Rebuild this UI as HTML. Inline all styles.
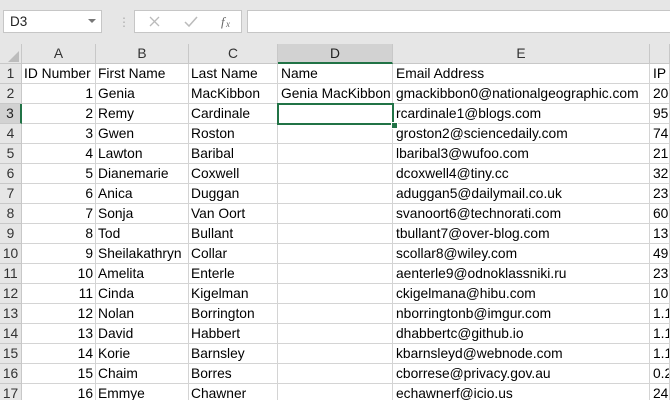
<!DOCTYPE html>
<html><head><style>
html,body{margin:0;width:670px;height:400px;overflow:hidden}
body{background:#fff;font-family:"Liberation Sans",Arial,sans-serif;position:relative}
.top{position:absolute;left:0;top:0;width:670px;height:44px;background:#e6e6e6}
.nb{position:absolute;left:3px;top:10px;width:99px;height:23px;background:#fff;border:1px solid #c6c6c6;box-sizing:border-box;font-size:13.5px;line-height:21px;padding-left:6px;color:#222}
.fb{position:absolute;left:134px;top:10px;width:108px;height:23px;background:#fff;border:1px solid #c6c6c6;box-sizing:border-box}
.fx{position:absolute;left:247px;top:10px;width:423px;height:23px;background:#fff;border:1px solid #c6c6c6;border-right:none;box-sizing:border-box}
.c{position:absolute;box-sizing:border-box;border-right:1px solid #d4d4d4;border-bottom:1px solid #d4d4d4;font-size:13.8px;line-height:20px;white-space:nowrap;overflow:hidden;padding:0 2px;color:#000}
.h{background:#e6e6e6;border-color:#c8c8c8;text-align:center;color:#333}
.r{text-align:right}
</style></head><body>
<div class="top"></div>
<div class="nb">D3</div>
<div style="position:absolute;left:88px;top:19px;width:0;height:0;border-left:4px solid transparent;border-right:4px solid transparent;border-top:4px solid #777"></div>
<div style="position:absolute;left:118px;top:15px;color:#aaa;font-size:12px">⋮</div>
<div class="fb">
<svg width="106" height="21" style="position:absolute;left:0;top:0"><path d="M15 6l9 9M24 6l-9 9" stroke="#bbb" stroke-width="1.3" fill="none"/><path d="M50 11l4 4 8-9" stroke="#bbb" stroke-width="1.5" fill="none"/><text x="86" y="15" font-family="Liberation Serif" font-style="italic" font-size="13" fill="#666">f</text><text x="91" y="16" font-family="Liberation Serif" font-style="italic" font-size="9" fill="#666">x</text></svg>
</div>
<div class="fx"></div>
<div id="g"></div>
<script>
var cols=[0,22,96,189,278,393,650,670];
var hd=["","A","B","C","D","E",""];
var data=[
["ID Number","First Name","Last Name","Name","Email Address","IP Address"],
["1","Genia","MacKibbon","Genia MacKibbon","gmackibbon0@nationalgeographic.com","200.1"],
["2","Remy","Cardinale","","rcardinale1@blogs.com","95.1"],
["3","Gwen","Roston","","groston2@sciencedaily.com","74.1"],
["4","Lawton","Baribal","","lbaribal3@wufoo.com","217"],
["5","Dianemarie","Coxwell","","dcoxwell4@tiny.cc","32.1"],
["6","Anica","Duggan","","aduggan5@dailymail.co.uk","231"],
["7","Sonja","Van Oort","","svanoort6@technorati.com","60.1"],
["8","Tod","Bullant","","tbullant7@over-blog.com","139"],
["9","Sheilakathryn","Collar","","scollar8@wiley.com","49.1"],
["10","Amelita","Enterle","","aenterle9@odnoklassniki.ru","238"],
["11","Cinda","Kigelman","","ckigelmana@hibu.com","109"],
["12","Nolan","Borrington","","nborringtonb@imgur.com","1.1"],
["13","David","Habbert","","dhabbertc@github.io","1.1"],
["14","Korie","Barnsley","","kbarnsleyd@webnode.com","1.1"],
["15","Chaim","Borres","","cborrese@privacy.gov.au","0.2"],
["16","Emmye","Chawner","","echawnerf@icio.us","248"]];
var h="";
function cell(x,y,w,ht,cls,t,st){h+='<div class="c '+cls+'" style="left:'+x+'px;top:'+y+'px;width:'+w+'px;height:'+ht+'px;'+(st||'')+'">'+t+'</div>';}
for(var i=0;i<7;i++){var st=i==4?'background:#d2d2d2;border-bottom:2px solid #217346;color:#222':'';cell(cols[i],44,cols[i+1]-cols[i],20,'h',hd[i],st);}
h+='<div style="position:absolute;left:8px;top:51px;width:0;height:0;border-left:11px solid transparent;border-bottom:11px solid #bcbcbc"></div>';
for(var r=0;r<data.length;r++){var y=64+r*20;
 cell(0,y,22,20,'h',r+1,r==2?'background:#d2d2d2;border-right:2px solid #217346;color:#222':'');
 if(r==1){h+='<div class="c" style="left:278px;top:'+y+'px;width:116px;height:20px;border-right:none;padding-left:3px">'+data[r][3]+'</div>';}
 for(var c=0;c<6;c++){var t=data[r][c];if(r==1&&c==3){t="";}
  var cl=(c==0&&r>0)?'r':'';
  cell(cols[c+1],y,cols[c+2]-cols[c+1],20,cl,t,(c>=3?'padding-left:3px;':''));}
}
h+='<div style="position:absolute;left:277px;top:103px;width:117px;height:22px;border:2px solid #217346;box-sizing:border-box"></div>';
h+='<div style="position:absolute;left:391px;top:122px;width:5px;height:5px;background:#217346;border:1px solid #fff"></div>';
document.getElementById('g').innerHTML=h;
</script>
</body></html>
